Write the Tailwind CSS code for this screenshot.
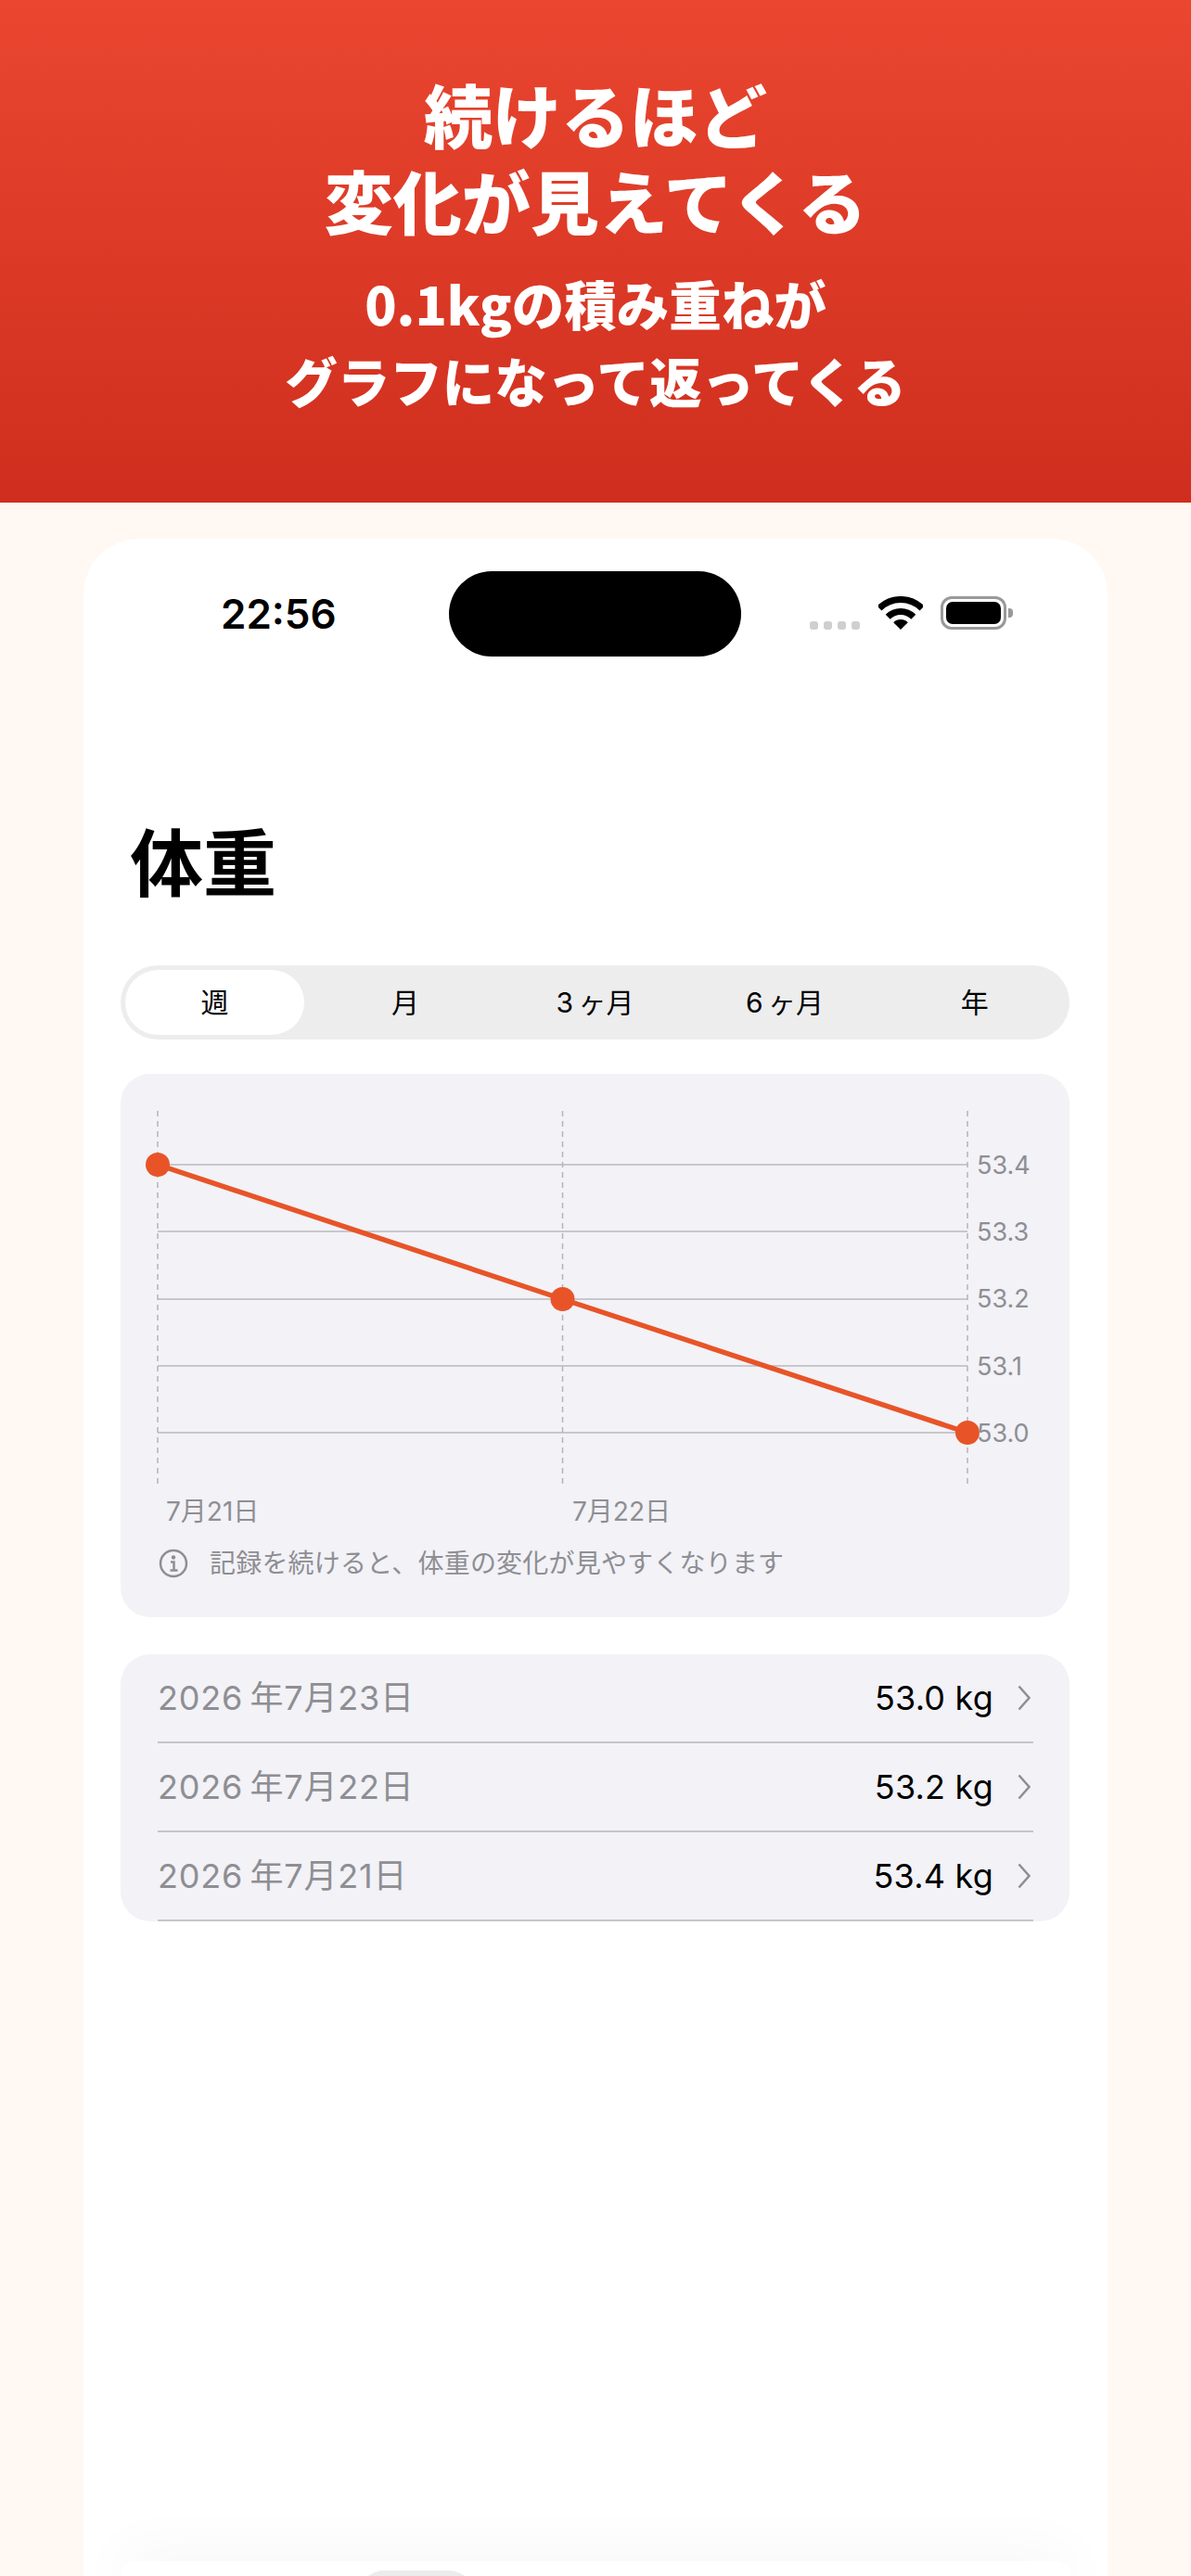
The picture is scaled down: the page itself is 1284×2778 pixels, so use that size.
<!DOCTYPE html>
<html lang="ja">
<head>
  <meta charset="UTF-8" />
  <meta name="viewport" content="width=device-width, initial-scale=1.0"/>
  <title>体重</title>
  <script src="https://cdn.jsdelivr.net/npm/@tailwindcss/browser@4"></script>
</head>
<body class="bg-[#fff8f3] font-['Inter','Noto_Sans_CJK_JP',sans-serif]">
<div class="h-[2778px] overflow-hidden flex flex-col">

  <!-- Header -->
  <header class="h-[542px] shrink-0 bg-gradient-to-b from-[#ea4630] to-[#cf2e1e] pt-[75px] text-center text-white font-black font-['Noto_Sans_CJK_JP',sans-serif]">
    <h1 class="text-[74px] leading-[93px]">続けるほど<br>変化が見えてくる</h1>
    <p class="mt-[24px] text-[56.5px] leading-[83px]">0.1kgの積み重ねが<br>グラフになって返ってくる</p>
  </header>

  <!-- Phone -->
  <div class="mt-[39px] ml-[90px] w-[1104px] flex-1 bg-white rounded-t-[60px] flex flex-col">

    <!-- Status bar -->
    <div class="mt-[35px] h-[92px] flex items-center relative">
      <span class="ml-[148px] w-[124px] text-[44px] font-semibold text-black leading-none">22:56</span>
      <div class="ml-[122px] w-[315px] h-[92px] rounded-full bg-black"></div>
      <div class="ml-[74px] flex gap-[6px] mt-[24px]">
        <i class="w-[9px] h-[9px] rounded-[3px] bg-[#cfcfcf]"></i>
        <i class="w-[9px] h-[9px] rounded-[3px] bg-[#cfcfcf]"></i>
        <i class="w-[9px] h-[9px] rounded-[3px] bg-[#cfcfcf]"></i>
        <i class="w-[9px] h-[9px] rounded-[3px] bg-[#cfcfcf]"></i>
      </div>
      <svg class="ml-[20px] -mt-[2px]" width="48" height="36" viewBox="0 0 48 36">
        <path d="M1 13A32.5 32.5 0 0 1 47 13" fill="none" stroke="#000" stroke-width="7"/>
        <path d="M10.2 22.2A19.5 19.5 0 0 1 37.8 22.2" fill="none" stroke="#000" stroke-width="7"/>
        <path d="M24 36L16.2 28.2A11 11 0 0 1 31.8 28.2Z" fill="#000"/>
      </svg>
      <div class="ml-[19px] -mt-[2px] flex items-center">
        <div class="w-[71px] h-[36px] rounded-[12px] border-[3px] border-[#999] p-[3px]">
          <div class="w-full h-full rounded-[7px] bg-black"></div>
        </div>
        <div class="ml-[2px] w-[5px] h-[10px] rounded-r-[4px] bg-[#999]"></div>
      </div>
    </div>

    <h2 class="mt-[176px] ml-[50px] text-[79px] leading-[96px] font-bold text-black">体重</h2>

    <!-- Range tabs -->
    <div class="mt-[61px] mx-[40px] w-[1023px] h-[80px] rounded-full bg-[#ededee] grid grid-cols-5 items-center text-center text-[30px] text-black">
      <div class="ml-[5px] w-[193px] h-[70px] rounded-full bg-white flex items-center justify-center">週</div>
      <div>月</div>
      <div>3&#8201;ヶ月</div>
      <div>6&#8201;ヶ月</div>
      <div>年</div>
    </div>

    <!-- Chart card -->
    <section class="mt-[37px] mx-[40px] w-[1023px] h-[586px] rounded-[32px] bg-[#f2f2f7]">
      <svg class="block" width="1023" height="500" viewBox="0 0 1023 500" font-family="Inter, 'Noto Sans CJK JP', sans-serif">
        <g stroke="#c7c7cc" stroke-width="2">
          <line x1="40" y1="98" x2="913" y2="98"/>
          <line x1="40" y1="170" x2="913" y2="170"/>
          <line x1="40" y1="243" x2="913" y2="243"/>
          <line x1="40" y1="315" x2="913" y2="315"/>
          <line x1="40" y1="387" x2="913" y2="387"/>
        </g>
        <g stroke="#b4b4b9" stroke-width="1.5" stroke-dasharray="6 5">
          <line x1="40" y1="40" x2="40" y2="445"/>
          <line x1="476.5" y1="40" x2="476.5" y2="445"/>
          <line x1="913" y1="40" x2="913" y2="445"/>
        </g>
        <polyline points="40,98 476.5,243 913,387" fill="none" stroke="#e85428" stroke-width="5.5"/>
        <circle cx="40" cy="98" r="13" fill="#e85428"/>
        <circle cx="476.5" cy="243" r="13" fill="#e85428"/>
        <circle cx="913" cy="387" r="13" fill="#e85428"/>
        <g fill="#8e8e93" font-size="27">
          <text x="923" y="108">53.4</text>
          <text x="923" y="180">53.3</text>
          <text x="923" y="252">53.2</text>
          <text x="923" y="325">53.1</text>
          <text x="923" y="397">53.0</text>
        </g>
        <g fill="#8e8e93" font-size="28">
          <text x="49" y="482">7月21日</text>
          <text x="487" y="482">7月22日</text>
        </g>
      </svg>
      <div class="mt-[8px] ml-[40px] h-[40px] flex items-center gap-[22px] text-[28px] tracking-[0.2px] text-[#8e8e93]">
        <svg width="34" height="34" viewBox="0 0 34 34" fill="none" stroke="#8e8e93" stroke-width="2.5">
          <circle cx="17" cy="17" r="14"/>
          <path d="M14 15.5h3.5v9M13.5 24.5h8"/>
          <circle cx="17" cy="10.5" r="1" fill="#8e8e93"/>
        </svg>
        <span>記録を続けると、体重の変化が見やすくなります</span>
      </div>
    </section>

    <!-- History list -->
    <section class="mt-[40px] mx-[40px] w-[1023px] rounded-[32px] bg-[#f2f2f7] pl-[40px] pr-[39px] text-[36px]">
      <div class="h-[96px] border-b-2 border-[#c6c6c8] flex items-center">
        <span class="text-[#8e8e93] tracking-[0.8px]">2026&#8201;年7月23日</span>
        <span class="ml-auto text-black tracking-[0.2px]">53.0 kg</span>
        <svg class="ml-[26px] mr-[3px]" width="14" height="28" viewBox="0 0 14 28" fill="none" stroke="#8e8e93" stroke-width="2.5"><path d="M1.5 1.5L12.5 14L1.5 26.5"/></svg>
      </div>
      <div class="h-[96px] border-b-2 border-[#c6c6c8] flex items-center">
        <span class="text-[#8e8e93] tracking-[0.8px]">2026&#8201;年7月22日</span>
        <span class="ml-auto text-black tracking-[0.2px]">53.2 kg</span>
        <svg class="ml-[26px] mr-[3px]" width="14" height="28" viewBox="0 0 14 28" fill="none" stroke="#8e8e93" stroke-width="2.5"><path d="M1.5 1.5L12.5 14L1.5 26.5"/></svg>
      </div>
      <div class="h-[96px] border-b-2 border-[#c6c6c8] flex items-center">
        <span class="text-[#8e8e93] tracking-[0.8px]">2026&#8201;年7月21日</span>
        <span class="ml-auto text-black tracking-[0.2px]">53.4 kg</span>
        <svg class="ml-[26px] mr-[3px]" width="14" height="28" viewBox="0 0 14 28" fill="none" stroke="#8e8e93" stroke-width="2.5"><path d="M1.5 1.5L12.5 14L1.5 26.5"/></svg>
      </div>
    </section>

    <!-- Tab bar, cut off by the bottom of the page -->
    <nav class="mt-auto mx-[40px] h-[16px] rounded-t-[100px] bg-white shadow-[0_0_60px_rgba(0,0,0,0.1)] overflow-hidden">
      <div class="mt-[10px] ml-[255px] w-[128px] h-[40px] rounded-t-[30px] bg-[#ececec]"></div>
    </nav>
  </div>
</div>
</body>
</html>
